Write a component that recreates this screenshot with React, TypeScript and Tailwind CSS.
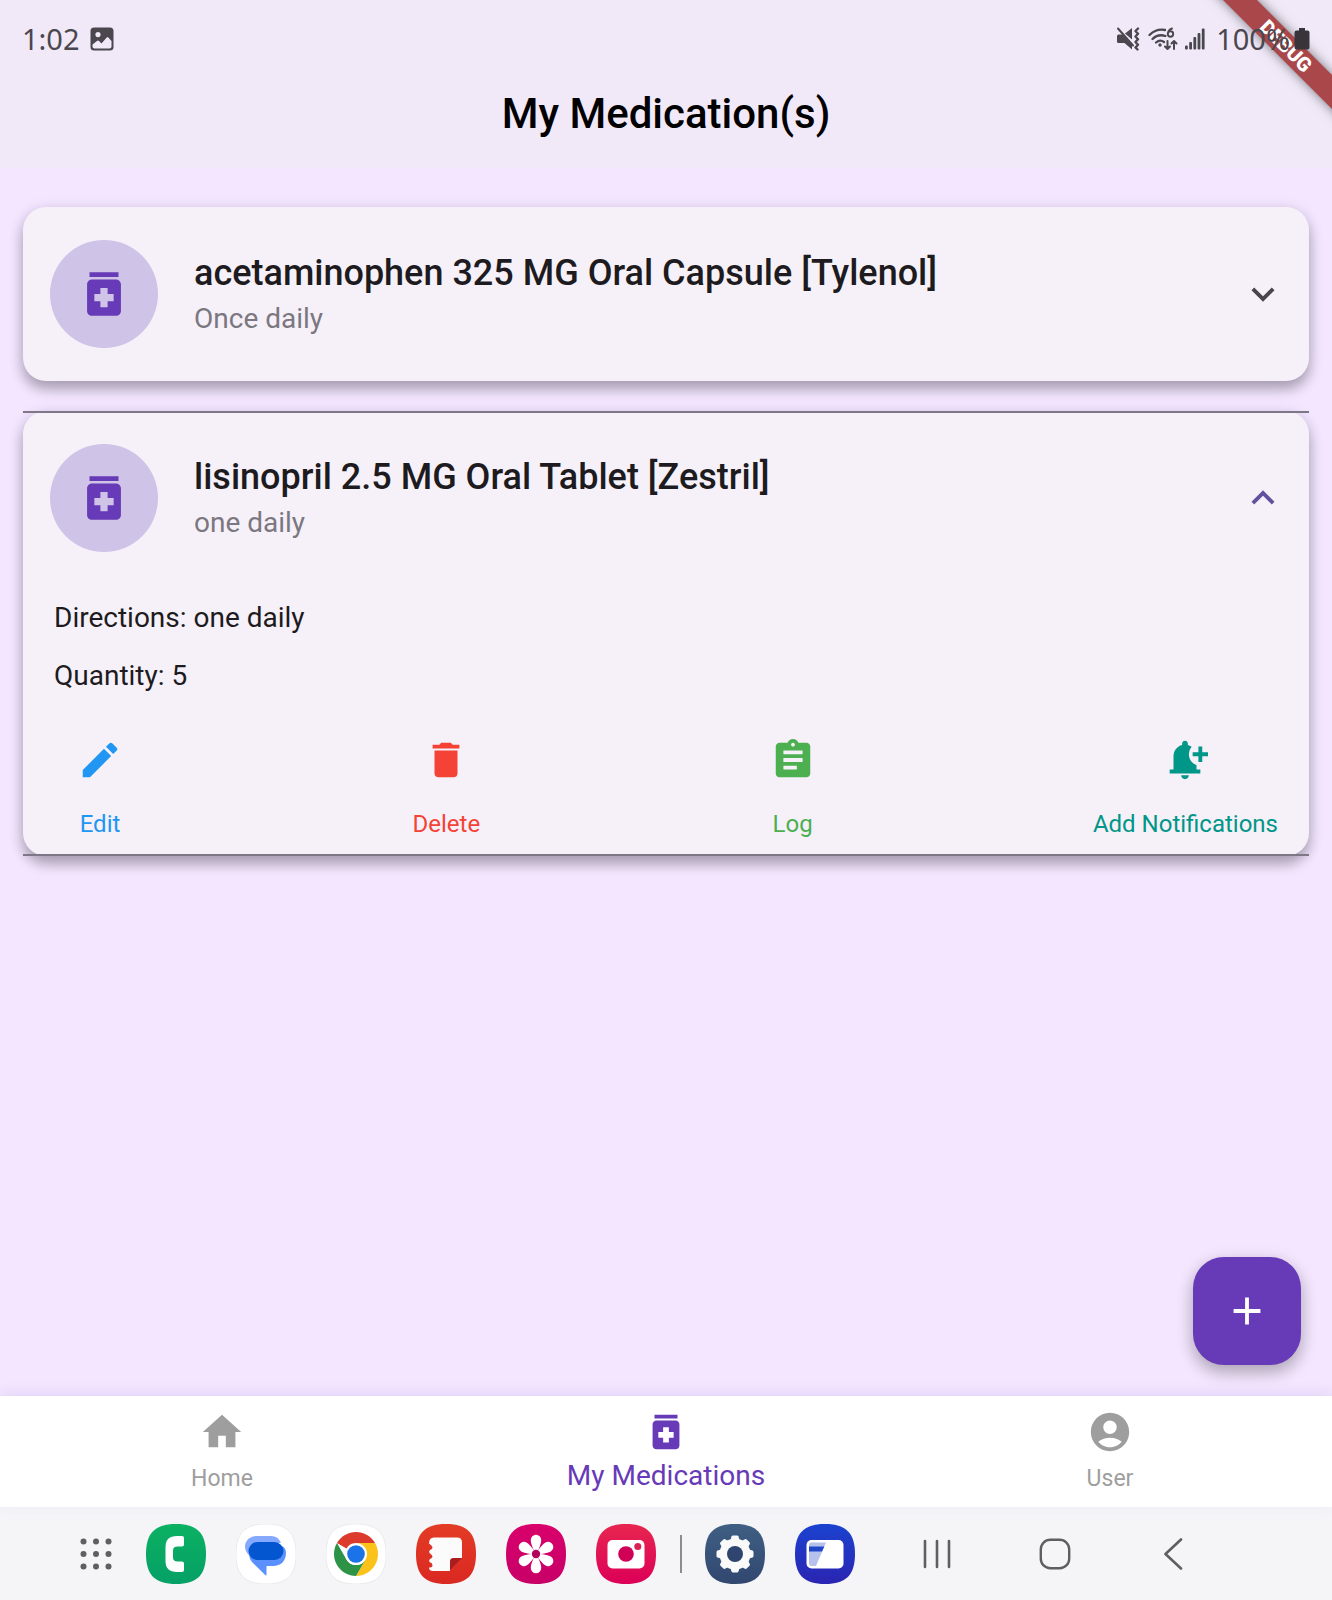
import { useState, type ReactNode } from "react";
import {
  MdAccountCircle,
  MdAdd,
  MdAssignment,
  MdDelete,
  MdEdit,
  MdExpandLess,
  MdExpandMore,
  MdHome,
  MdMedication,
  MdNotificationAdd,
} from "react-icons/md";

type Medication = {
  id: string;
  name: string;
  directions: string;
  quantity: number;
};

const medications: Medication[] = [
  { id: "tylenol", name: "acetaminophen 325 MG Oral Capsule [Tylenol]", directions: "Once daily", quantity: 30 },
  { id: "zestril", name: "lisinopril 2.5 MG Oral Tablet [Zestril]", directions: "one daily", quantity: 5 },
];

const SQUIRCLE = "M30 0C51 0 60 9 60 30S51 60 30 60 0 51 0 30 9 0 30 0Z";

function StatusBar() {
  return (
    <div className="relative z-20 flex h-[78px] items-center justify-between px-[22px] font-['Noto_Sans',sans-serif] text-[29px] leading-8 text-[#4a474e]">
      <div className="flex items-center gap-[10px]">
        <span>1:02</span>
        <svg viewBox="0 0 24 24" className="size-6" aria-label="Image notification">
          <path
            fill="currentColor"
            fillRule="evenodd"
            d="M4 0.5h16a3.5 3.5 0 0 1 3.5 3.5v16a3.5 3.5 0 0 1-3.5 3.500H4A3.500 3.500 0 0 1 .5 20V4A3.500 3.500 0 0 1 4 .5ZM8 5a2.600 2.600 0 1 0 0 5.200A2.600 2.600 0 0 0 8 5ZM2.500 17.500v2q0 2 2 2h15q2 0 2-2V14l-3.200-3.500q-.8-.8-1.600 0L11.500 16.500 9 14q-1-.9-2 0Z"
          />
        </svg>
      </div>
      <div className="flex items-center">
        <svg viewBox="0 0 24 24" className="size-6" fill="currentColor" aria-label="Muted, vibrate">
          <path d="M1 9q0-1.500 1.500-1.500h4L16 18v4.500L8.500 16H2.500Q1 16 1 14.500ZM9 6.500 16 1v11.500Z" />
          <path d="M2 1.500 17 18.500" stroke="currentColor" strokeWidth="2" strokeLinecap="round" />
          <path
            d="M22 1.500 19.500 4 22 6.800 19.500 9.500 22 12.200 19.500 15 22 17.800 19.500 20.500 21.500 22.500"
            fill="none"
            stroke="currentColor"
            strokeWidth="2.400"
            strokeLinecap="round"
            strokeLinejoin="round"
          />
        </svg>
        <svg viewBox="0 0 30 24" className="ml-2 h-6 w-[30px]" fill="none" stroke="currentColor" strokeWidth="2.300" strokeLinecap="round" aria-label="Wi-Fi 6">
          <path d="M1.500 8Q8 1.500 17 3M4.500 12Q10 6.500 17.500 9M8 15.500q4-3.500 8-.5" />
          <circle cx="12" cy="18" r="1.700" fill="currentColor" stroke="none" />
          <path strokeWidth="1.900" d="M24 1.500Q20 3 19.800 7M19.800 7a2.700 2.700 0 1 0 5.400 0 2.700 2.700 0 1 0-5.400 0" />
          <path strokeWidth="2" strokeLinejoin="round" d="M19.500 14v8M17 19.500l2.500 2.500 2.500-2.500M26 22v-8M23.500 16.500 26 14l2.500 2.500" />
        </svg>
        <svg viewBox="0 0 22 24" className="ml-[6px] h-6 w-[22px]" fill="currentColor" aria-label="Signal strength">
          <rect x="1" y="18.500" width="2.800" height="4" rx="1" />
          <rect x="5.200" y="15" width="2.800" height="7.500" rx="1" />
          <rect x="9.400" y="10" width="2.800" height="12.500" rx="1" />
          <rect x="13.600" y="6" width="2.800" height="16.500" rx="1" />
          <rect x="17.800" y="1.500" width="2.800" height="21" rx="1" />
        </svg>
        <span className="ml-[10px]">100%</span>
        <svg viewBox="0 0 16 24" className="ml-1 h-6 w-4" fill="#37353a" aria-label="Battery full">
          <path d="M5 1h6v2.500h2.500q2 0 2 2V20.500q0 2-2 2h-11q-2 0-2-2V5.500q0-2 2-2H5Z" />
        </svg>
      </div>
    </div>
  );
}

function DebugRibbon() {
  return (
    <div className="pointer-events-none absolute top-0 right-0 z-10 h-36 w-36 overflow-hidden">
      <div className="absolute top-[34px] left-0 flex h-6 w-[196px] rotate-45 items-center justify-center bg-[#aa474a] text-[20px] font-black text-white shadow-[0_0_12px_rgba(0,0,0,0.5)]">
        DEBUG
      </div>
    </div>
  );
}

function ActionButton({ label, className, children }: { label: string; className: string; children: ReactNode }) {
  return (
    <button type="button" className={`flex min-w-[92px] flex-col items-center text-[24px] leading-8 ${className}`}>
      <span className="flex h-24 items-center text-[46px]">{children}</span>
      {label}
    </button>
  );
}

function MedicationCard({ med, open, onToggle }: { med: Medication; open: boolean; onToggle: () => void }) {
  const lines = open
    ? "before:absolute before:inset-x-0 before:top-0 before:h-[2px] before:bg-[#7e7787] after:absolute after:inset-x-0 after:bottom-0 after:h-[2px] after:bg-[#7e7787]"
    : "";
  return (
    <li className={`relative rounded-[23px] bg-[#f6f1f9] shadow-[0_8px_13px_rgba(0,0,0,0.28),0_2px_16px_rgba(60,30,120,0.1)] ${lines}`}>
      <button type="button" aria-expanded={open} onClick={onToggle} className="flex w-full items-center py-[33px] pr-[23px] pl-[27px] text-left">
        <span className="flex size-[108px] shrink-0 items-center justify-center rounded-full bg-[#cfc4e7] text-[58px] text-[#673ab7]">
          <MdMedication />
        </span>
        <span className="ml-9 flex-1 pt-[2px]">
          <span className="block text-[36px] leading-[48px] font-medium text-[#1d1b20]">{med.name}</span>
          <span className="block text-[28px] leading-[44px] text-[#7b7780]">{med.directions}</span>
        </span>
        <span className={`text-[46px] ${open ? "text-[#65509f]" : "text-[#49454f]"}`}>
          {open ? <MdExpandLess /> : <MdExpandMore />}
        </span>
      </button>
      {open && (
        <div className="px-[31px] pt-[17px] pb-4">
          <p className="text-[28px] leading-8 text-[#1d1b20]">Directions: {med.directions}</p>
          <p className="mt-[26px] text-[28px] leading-8 text-[#1d1b20]">Quantity: {med.quantity}</p>
          <div className="mt-5 flex flex-wrap justify-between">
            <ActionButton label="Edit" className="text-[#2196f3]">
              <MdEdit />
            </ActionButton>
            <ActionButton label="Delete" className="text-[#f44336]">
              <MdDelete />
            </ActionButton>
            <ActionButton label="Log" className="text-[#4caf50]">
              <MdAssignment />
            </ActionButton>
            <ActionButton label="Add Notifications" className="text-[#009688]">
              <MdNotificationAdd />
            </ActionButton>
          </div>
        </div>
      )}
    </li>
  );
}

function BottomNav() {
  return (
    <nav className="relative grid h-[111px] grid-cols-3 bg-white text-[23px] leading-8 text-[#9e9e9e] shadow-[0_-3px_12px_rgba(90,70,190,0.1)]">
      <a href="#home" className="flex flex-col items-center pt-[13px]">
        <MdHome className="size-[46px]" />
        <span className="mt-2">Home</span>
      </a>
      <a href="#medications" aria-current="page" className="flex flex-col items-center pt-[13px] text-[#673ab7]">
        <MdMedication className="size-[46px]" />
        <span className="mt-[5px] text-[28px]">My Medications</span>
      </a>
      <a href="#user" className="flex flex-col items-center pt-[13px]">
        <MdAccountCircle className="size-[46px]" />
        <span className="mt-2">User</span>
      </a>
    </nav>
  );
}

function AppIcon({ label, id, from, to, outline, children }: { label: string; id: string; from: string; to: string; outline?: boolean; children: ReactNode }) {
  return (
    <button type="button" aria-label={label} className="shrink-0">
      <svg viewBox="0 0 60 60" className="size-[60px]">
        <defs>
          <linearGradient id={id} x1="0" y1="0" x2="0" y2="1">
            <stop offset="0" stopColor={from} />
            <stop offset="1" stopColor={to} />
          </linearGradient>
        </defs>
        <path d={SQUIRCLE} fill={`url(#${id})`} stroke={outline ? "#e6e6ea" : "none"} strokeWidth="0.8" />
        {children}
      </svg>
    </button>
  );
}

const SPOKES = [0, 45, 90, 135, 180, 225, 270, 315];
const PETALS = [0, 60, 120, 180, 240, 300];

function Taskbar() {
  return (
    <div className="flex h-[93px] items-center overflow-hidden bg-[#f5f5f8] pl-20 text-[#5f5f62]">
      <button type="button" aria-label="All apps" className="mr-[34px] shrink-0">
        <svg viewBox="0 0 32 32" className="size-8" fill="currentColor">
          {[3.5, 16, 28.5].map((y) => [3.5, 16, 28.5].map((x) => <circle key={`${x}-${y}`} cx={x} cy={y} r="3" />))}
        </svg>
      </button>
      <div className="flex shrink-0 gap-[30px]">
        <AppIcon label="Phone" id="phone" from="#0cb162" to="#05a067">
          <path
            fill="#fff"
            d="M31 12h5q2 0 2 2v6.500q0 2-2 2h-4.500q-4.500 0-4.500 4v7q0 4 4.500 4H36q2 0 2 2V46q0 2-2 2h-5Q19.500 48 19.500 37V23Q19.500 12 31 12Z"
          />
        </AppIcon>
        <AppIcon label="Messages" id="messages" from="#ffffff" to="#ffffff" outline>
          <path fill="#84a9ff" d="M21 12h14a11 11 0 0 1 10 7H30L14 32a13 13 0 0 1-5-9 11 11 0 0 1 12-11Z" />
          <path fill="#5b91ff" d="M13 31 46 22q4 2 4 7-.5 12-12 13H30.500v8.500q0 1.500-1.300.5L16 38Q13.500 35 13 31Z" />
          <rect x="12.500" y="18" width="35" height="18" rx="9" fill="#0456d0" />
        </AppIcon>
        <AppIcon label="Chrome" id="chrome" from="#ffffff" to="#ffffff" outline>
          <path fill="#dc3a2c" d="M30 30 10.950 19a22 22 0 0 1 38.100 0Z" />
          <path fill="#fbc21a" d="M30 19h19.050A22 22 0 0 1 30 52L39.530 35.500Z" />
          <path fill="#2d9447" d="M10.950 19 20.470 35.500A11 11 0 0 0 39.530 35.500L30 52A22 22 0 0 1 10.950 19Z" />
          <circle cx="30" cy="30" r="11" fill="#fff" />
          <circle cx="30" cy="30" r="8.800" fill="#1a73e8" />
        </AppIcon>
        <AppIcon label="Notes" id="notes" from="#e33c25" to="#da2822">
          <path
            fill="#fbfbfb"
            d="M18 13.500h23q5 0 5 5V34H38q-4 0-4 4v9H17q-4 0-4-3.500 3.500 0 3.500-2.300T13.500 38q-1-2 .5-3 2.500-1 2.500-2.500T13.500 29q-1-2 .5-3 2.500-1 2.500-2.500T13 19.500q0-6 5-6Z"
          />
          <path fill="#a91d1f" d="M46 34 34 46V38q0-4 4-4Z" />
        </AppIcon>
        <AppIcon label="Gallery" id="gallery" from="#d9006c" to="#c70067">
          {PETALS.map((a) => (
            <path key={a} fill="#fff" transform={`rotate(${a} 30 30)`} d="M28.500 28Q24.500 19 24.800 16a5.200 5.200 0 0 1 10.400 0Q35.500 19 31.500 28Z" />
          ))}
          <circle cx="30" cy="30" r="4.200" fill="#b3005c" />
        </AppIcon>
        <AppIcon label="Camera" id="camera" from="#e7264f" to="#dc0058">
          <rect x="11.500" y="16" width="37" height="28.500" rx="5" fill="#fff" />
          <circle cx="30" cy="30" r="7.800" fill="#cf0056" />
          <circle cx="41.800" cy="22.500" r="3.500" fill="#dc2054" />
        </AppIcon>
      </div>
      <div className="mr-[23px] ml-6 h-[38px] w-[2px] shrink-0 bg-[#8d8d90]" />
      <div className="flex shrink-0 gap-[30px]">
        <AppIcon label="Settings" id="settings" from="#3f5f83" to="#31476f">
          {SPOKES.map((a) => (
            <path key={a} fill="#fafafa" transform={`rotate(${a} 30 30)`} d="M25.500 16 26.500 12.500Q27 11.500 28 11.500h4q1 0 1.500 1L34.500 16Z" />
          ))}
          <circle cx="30" cy="30" r="15.500" fill="#fafafa" />
          <circle cx="30" cy="30" r="8" fill="#2f446e" />
        </AppIcon>
        <AppIcon label="My Files" id="files" from="#1b43cf" to="#2a25b2">
          <rect x="11.500" y="16" width="37" height="28.500" rx="5" fill="#fff" />
          <path fill="#b7c2ec" d="M16 18.500h15L21 42H17q-3 0-3-3V21q0-2.500 2-2.500Z" />
          <path fill="#2146c8" d="M14 22.500h15.300L27 27.500H14Z" />
        </AppIcon>
      </div>
      <button type="button" aria-label="Recent apps" className="ml-[66px] shrink-0">
        <svg viewBox="0 0 32 32" className="size-8" stroke="currentColor" strokeWidth="2.600" strokeLinecap="round">
          <path d="M4 3v26M16 3v26M28 3v26" />
        </svg>
      </button>
      <button type="button" aria-label="Home" className="ml-[86px] shrink-0">
        <svg viewBox="0 0 32 32" className="size-8" fill="none" stroke="currentColor" strokeWidth="2.400">
          <rect x="1.800" y="1.800" width="28.400" height="28.400" rx="9.500" />
        </svg>
      </button>
      <button type="button" aria-label="Back" className="ml-[86px] shrink-0">
        <svg viewBox="0 0 32 32" className="size-8" fill="none" stroke="currentColor" strokeWidth="2.600" strokeLinecap="round" strokeLinejoin="round">
          <path d="M24 1.500 8.500 16 24 30.500" />
        </svg>
      </button>
    </div>
  );
}

export default function App() {
  const [openId, setOpenId] = useState("zestril");
  return (
    <div className="relative flex min-h-screen flex-col bg-[#f3e6fe] font-[Roboto,sans-serif]">
      <header className="bg-[#f1e9f8]">
        <StatusBar />
        <h1 className="pt-[10px] pb-7 text-center text-[42px] leading-[52px] font-medium text-black">My Medication(s)</h1>
      </header>
      <DebugRibbon />
      <main className="relative flex-1 px-[23px] pt-[39px]">
        <ul className="flex flex-col gap-[30px]">
          {medications.map((med) => (
            <MedicationCard key={med.id} med={med} open={openId === med.id} onToggle={() => setOpenId(openId === med.id ? "" : med.id)} />
          ))}
        </ul>
        <button
          type="button"
          aria-label="Add medication"
          className="absolute right-[31px] bottom-[31px] z-10 flex size-[108px] items-center justify-center rounded-[31px] bg-[#673ab7] text-[46px] text-white shadow-[0_8px_16px_rgba(0,0,0,0.22),0_3px_18px_rgba(0,0,0,0.1)]"
        >
          <MdAdd />
        </button>
      </main>
      <BottomNav />
      <Taskbar />
    </div>
  );
}
